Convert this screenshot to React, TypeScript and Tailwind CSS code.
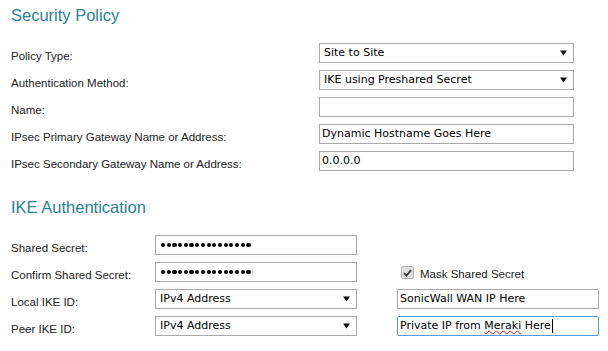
import React from "react";

const labelCls =
  "text-[11.5px] leading-[20px] mt-[3px] text-[#222] font-['Liberation_Sans',Arial,sans-serif]";
const ctlText = "font-['DejaVu_Sans',Verdana,sans-serif] text-[11px] leading-[18px] text-black";

function Select({ value, w }: { value: string; w: string }) {
  return (
    <div
      className={`${w} h-[20px] border border-[#a9a9a9] bg-white flex items-center justify-between pl-[4px] pr-[6px] ${ctlText}`}
    >
      <span>{value}</span>
      <svg width="7" height="6" viewBox="0 0 7 6" className="shrink-0">
        <path d="M0 0.5 H7 L3.5 5.5 Z" fill="#111" />
      </svg>
    </div>
  );
}

function Input({ value, w, focused, children }: { value?: string; w: string; focused?: boolean; children?: React.ReactNode }) {
  return (
    <div
      className={`${w} h-[20px] border ${
        focused ? "border-[#5b9ad9] rounded-[2px]" : "border-[#a9a9a9]"
      } bg-white flex items-center pl-[2px] ${ctlText}`}
    >
      {children ?? <span>{value}</span>}
    </div>
  );
}

function Dots() {
  return (
    <div className="flex items-center gap-[1.5px] pl-[3px]">
      {Array.from({ length: 16 }).map((_, i) => (
        <span key={i} className="w-[4.2px] h-[4.2px] rounded-full bg-black block" />
      ))}
    </div>
  );
}

export default function App() {
  return (
    <div className="w-[608px] h-[351px] bg-white pl-[11px] font-['Liberation_Sans',Arial,sans-serif] overflow-hidden">
      <div className="pt-[3px] h-[27px] text-[16.5px] leading-[24px] text-[#2a8393]">Security Policy</div>
      <div className="mt-[16px] flex flex-col gap-[7px]">
        {[
          ["Policy Type:", <Select key="a" value="Site to Site" w="w-[255px]" />],
          ["Authentication Method:", <Select key="b" value="IKE using Preshared Secret" w="w-[255px]" />],
          ["Name:", <Input key="c" value="" w="w-[255px]" />],
          ["IPsec Primary Gateway Name or Address:", <Input key="d" value="Dynamic Hostname Goes Here" w="w-[255px]" />],
          ["IPsec Secondary Gateway Name or Address:", <Input key="e" value="0.0.0.0" w="w-[255px]" />],
        ].map(([label, ctl], i) => (
          <div key={i} className="flex h-[20px]">
            <div className={`w-[308px] ${labelCls}`}>{label}</div>
            {ctl}
          </div>
        ))}
      </div>
      <div className="mt-[24px] h-[24px] text-[16.5px] leading-[24px] text-[#2a8393]">IKE Authentication</div>
      <div className="mt-[16px] flex flex-col gap-[7px]">
        <div className="flex h-[20px]">
          <div className={`w-[144px] ${labelCls}`}>Shared Secret:</div>
          <Input w="w-[202px]">
            <Dots />
          </Input>
        </div>
        <div className="flex h-[20px]">
          <div className={`w-[144px] ${labelCls}`}>Confirm Shared Secret:</div>
          <Input w="w-[202px]">
            <Dots />
          </Input>
          <div className="ml-[44px] flex items-start">
            <div className="mt-[4px] w-[13px] h-[13px] rounded-[2px] border border-[#b5b5b5] bg-[#dedede] flex items-center justify-center">
              <svg width="9" height="8" viewBox="0 0 9 8">
                <path d="M1 4.2 L3.4 6.6 L8 1.2" stroke="#3a3a3a" strokeWidth="1.8" fill="none" />
              </svg>
            </div>
            <span className="ml-[6px] text-[11.5px] leading-[20px] mt-[2px] text-[#222]">Mask Shared Secret</span>
          </div>
        </div>
        <div className="flex h-[20px]">
          <div className={`w-[144px] ${labelCls}`}>Local IKE ID:</div>
          <Select value="IPv4 Address" w="w-[202px]" />
          <div className="ml-[40px]">
            <Input value="SonicWall WAN IP Here" w="w-[202px]" />
          </div>
        </div>
        <div className="flex h-[20px]">
          <div className={`w-[144px] ${labelCls}`}>Peer IKE ID:</div>
          <Select value="IPv4 Address" w="w-[202px]" />
          <div className="ml-[40px]">
            <Input w="w-[202px]" focused>
              <span>
                Private IP from{" "}
                <span className="underline decoration-wavy decoration-[#e02020] decoration-[1px] underline-offset-[1px]">
                  Meraki
                </span>{" "}
                Here
              </span>
              <span className="inline-block w-[1px] h-[14px] bg-black ml-[1px]" />
            </Input>
          </div>
        </div>
      </div>
    </div>
  );
}
